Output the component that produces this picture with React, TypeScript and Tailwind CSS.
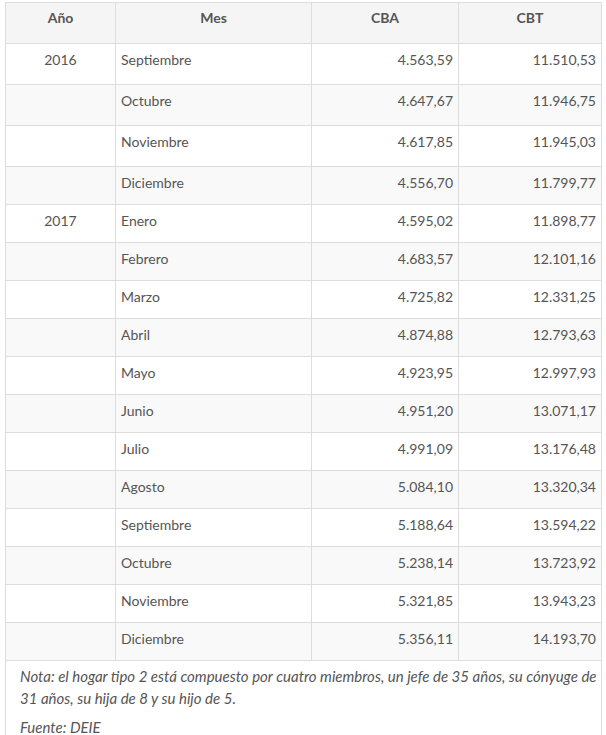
import React from "react";

const rows: { year?: string; month: string; cba: string; cbt: string; h: string }[] = [
  { year: "2016", month: "Septiembre", cba: "4.563,59", cbt: "11.510,53", h: "h-[41px]" },
  { month: "Octubre", cba: "4.647,67", cbt: "11.946,75", h: "h-[41px]" },
  { month: "Noviembre", cba: "4.617,85", cbt: "11.945,03", h: "h-[41px]" },
  { month: "Diciembre", cba: "4.556,70", cbt: "11.799,77", h: "h-[38px]" },
  { year: "2017", month: "Enero", cba: "4.595,02", cbt: "11.898,77", h: "h-[38px]" },
  { month: "Febrero", cba: "4.683,57", cbt: "12.101,16", h: "h-[38px]" },
  { month: "Marzo", cba: "4.725,82", cbt: "12.331,25", h: "h-[38px]" },
  { month: "Abril", cba: "4.874,88", cbt: "12.793,63", h: "h-[38px]" },
  { month: "Mayo", cba: "4.923,95", cbt: "12.997,93", h: "h-[38px]" },
  { month: "Junio", cba: "4.951,20", cbt: "13.071,17", h: "h-[38px]" },
  { month: "Julio", cba: "4.991,09", cbt: "13.176,48", h: "h-[38px]" },
  { month: "Agosto", cba: "5.084,10", cbt: "13.320,34", h: "h-[38px]" },
  { month: "Septiembre", cba: "5.188,64", cbt: "13.594,22", h: "h-[38px]" },
  { month: "Octubre", cba: "5.238,14", cbt: "13.723,92", h: "h-[38px]" },
  { month: "Noviembre", cba: "5.321,85", cbt: "13.943,23", h: "h-[38px]" },
  { month: "Diciembre", cba: "5.356,11", cbt: "14.193,70", h: "h-[38px]" },
];

export default function App() {
  return (
    <div
      className="bg-white min-h-screen pl-[5px] pt-[2px] text-[14px] leading-5 text-[#555]"
      style={{ fontFamily: "Lato, 'Open Sans', sans-serif" }}
    >
      <table className="w-[596px] border-collapse table-fixed">
        <colgroup>
          <col className="w-[110px]" />
          <col className="w-[196px]" />
          <col className="w-[147px]" />
          <col className="w-[143px]" />
        </colgroup>
        <thead>
          <tr className="h-[41px] bg-[#f5f5f5]">
            {["Año", "Mes", "CBA", "CBT"].map((t) => (
              <th
                key={t}
                className="border border-[#dddddd] px-[5px] pt-[5px] pb-[14px] align-top text-center font-bold"
              >
                {t}
              </th>
            ))}
          </tr>
        </thead>
        <tbody>
          {rows.map((r, i) => (
            <tr key={i} className={`${r.h} ${i % 2 === 1 ? "bg-[#f9f9f9]" : "bg-white"}`}>
              <td className="border border-[#dddddd] px-[5px] pt-[6px] align-top text-center">
                {r.year}
              </td>
              <td className="border border-[#dddddd] px-[5px] pt-[6px] align-top">{r.month}</td>
              <td className="border border-[#dddddd] px-[5px] pt-[6px] align-top text-right">{r.cba}</td>
              <td className="border border-[#dddddd] px-[5px] pt-[6px] align-top text-right">{r.cbt}</td>
            </tr>
          ))}
        </tbody>
        <tfoot>
          <tr>
            <td colSpan={4} className="border border-[#dddddd] pl-[14px] pr-0 pt-[4px] pb-3 italic text-[15px] leading-[22px]">
              <p>
                Nota: el hogar tipo 2 está compuesto por cuatro miembros, un jefe de 35 años, su cónyuge de
                31 años, su hija de 8 y su hijo de 5.
              </p>
              <p className="mt-[7px]">Fuente: DEIE</p>
            </td>
          </tr>
        </tfoot>
      </table>
    </div>
  );
}
